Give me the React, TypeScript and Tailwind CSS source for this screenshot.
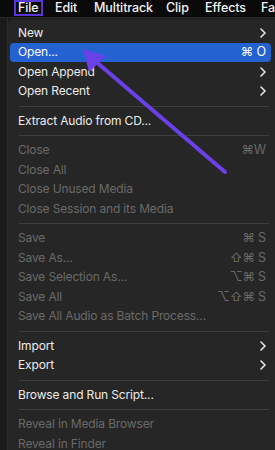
import React from "react";

type Item =
  | { kind: "sep" }
  | { kind: "item"; label: string; disabled?: boolean; shortcut?: string; sub?: boolean; active?: boolean };

const items: Item[] = [
  { kind: "item", label: "New", sub: true },
  { kind: "item", label: "Open...", shortcut: "⌘ O", active: true },
  { kind: "item", label: "Open Append", sub: true },
  { kind: "item", label: "Open Recent", sub: true },
  { kind: "sep" },
  { kind: "item", label: "Extract Audio from CD..." },
  { kind: "sep" },
  { kind: "item", label: "Close", disabled: true, shortcut: "⌘W" },
  { kind: "item", label: "Close All", disabled: true },
  { kind: "item", label: "Close Unused Media", disabled: true },
  { kind: "item", label: "Close Session and its Media", disabled: true },
  { kind: "sep" },
  { kind: "item", label: "Save", disabled: true, shortcut: "⌘ S" },
  { kind: "item", label: "Save As...", disabled: true, shortcut: "⇧⌘ S" },
  { kind: "item", label: "Save Selection As...", disabled: true, shortcut: "⌥⌘ S" },
  { kind: "item", label: "Save All", disabled: true, shortcut: "⌥⇧⌘ S" },
  { kind: "item", label: "Save All Audio as Batch Process...", disabled: true },
  { kind: "sep" },
  { kind: "item", label: "Import", sub: true },
  { kind: "item", label: "Export", sub: true },
  { kind: "sep" },
  { kind: "item", label: "Browse and Run Script..." },
  { kind: "sep" },
  { kind: "item", label: "Reveal in Media Browser", disabled: true },
  { kind: "item", label: "Reveal in Finder", disabled: true },
];

function Chevron() {
  return (
    <svg width="6" height="10" viewBox="0 0 6 10" className="block">
      <path d="M1 1 L5 5 L1 9" fill="none" stroke="#e6e6e6" strokeWidth="1.6" strokeLinecap="round" strokeLinejoin="round" />
    </svg>
  );
}

export default function App() {
  return (
    <div
      className="relative w-[275px] h-[450px] overflow-hidden bg-[#1b1b1b]"
      style={{ fontFamily: "Inter, 'DejaVu Sans', sans-serif" }}
    >
      {/* menu bar */}
      <div className="flex h-[18px] items-center bg-[#0a0a0a] text-[12.5px] font-medium tracking-[-0.1px] text-[#f2f2f2] border-b border-[#2a2a2a] leading-none">
        <div className="ml-[14px] flex h-[16px] w-[29px] items-center self-start border-2 border-[#5a36d6] pl-[2px]">File</div>
        <span className="ml-[12px] w-[39px]">Edit</span>
        <span className="w-[72px]">Multitrack</span>
        <span className="w-[39px]">Clip</span>
        <span className="w-[56px]">Effects</span>
        <span className="whitespace-nowrap">Fa</span>
      </div>

      {/* app strip + menu */}
      <div className="flex">
        <div className="w-[8px] shrink-0 h-[433px] bg-[#1a1a1a] border-r border-[#2c2c2c]" />
        <div className="mt-[1px] flex-1 rounded-tl-[6px] bg-[#262626] pt-[4px] pl-[2px] pr-[4px] text-[12px] tracking-[-0.15px] leading-none">
          {items.map((it, i) =>
            it.kind === "sep" ? (
              <div key={i} className="flex h-[10px] items-center pl-[9px] pr-[2px]">
                <div className="h-px w-full bg-[#3d3d3d]" />
              </div>
            ) : (
              <div
                key={i}
                className={
                  "flex h-[19.5px] items-center justify-between rounded-[4px] pl-[8px] pr-[5px] " +
                  (it.active ? "bg-[#2462d2] text-white" : it.disabled ? "text-[#6a6a6a]" : "text-[#ececec]")
                }
              >
                <span className="whitespace-nowrap">{it.label}</span>
                {it.shortcut && <span className="whitespace-nowrap text-[12.5px]">{it.shortcut}</span>}
                {it.sub && <Chevron />}
              </div>
            )
          )}
        </div>
      </div>

      {/* arrow annotation */}
      <svg className="absolute left-0 top-0" width="275" height="450" viewBox="0 0 275 450">
        <line x1="225" y1="172" x2="94" y2="60" stroke="#6a40e8" strokeWidth="4" strokeLinecap="round" />
        <polygon points="83,49 106,56 89,72" fill="#6a40e8" />
      </svg>
    </div>
  );
}
